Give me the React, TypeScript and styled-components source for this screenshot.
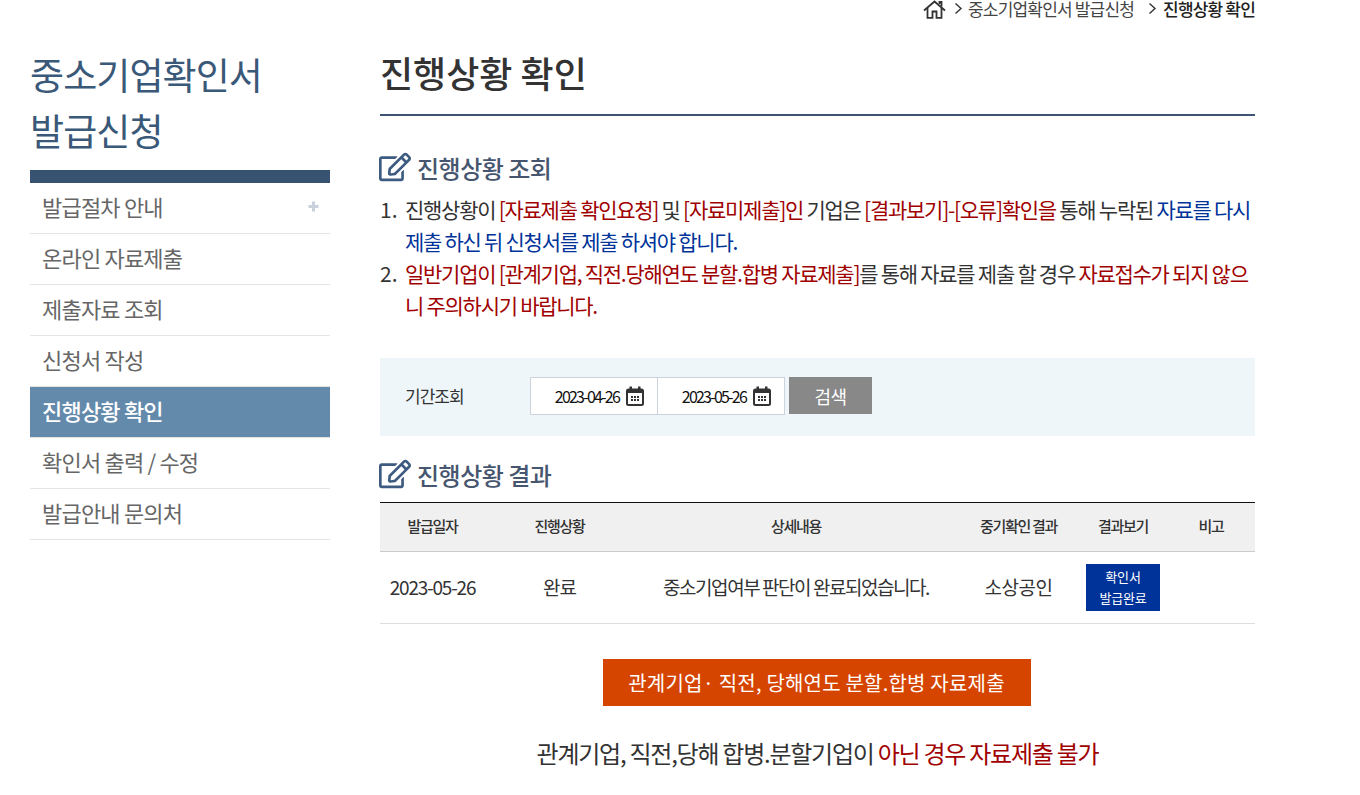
import styled, { createGlobalStyle } from 'styled-components';
import { FaRegEdit } from 'react-icons/fa';

const GlobalStyle = createGlobalStyle`
  html, body {
    margin: 0;
    padding: 0;
    background: #fff;
    overflow: hidden;
    font-family: "Noto Sans CJK KR", "Noto Sans", sans-serif;
    color: #333;
  }
  * { box-sizing: border-box; }
`;

const Page = styled.div`
  width: 1360px;
  height: 795px;
  overflow: hidden;
`;

const Breadcrumb = styled.div`
  display: flex;
  justify-content: flex-end;
  align-items: center;
  height: 19px;
  width: 1255px;
  font-size: 17px;
  line-height: 17px;
  letter-spacing: -0.82px;
  color: #444;
`;

const Crumb = styled.span<{ $gap: number; $current?: boolean }>`
  display: flex;
  align-items: center;
  margin-left: ${({ $gap }) => $gap}px;
  padding-bottom: 2px;
  font-weight: ${({ $current }) => ($current ? 500 : 400)};
  color: ${({ $current }) => ($current ? '#222' : '#444')};
`;

const Columns = styled.div`
  display: flex;
  padding: 0 0 0 30px;
`;

const Sidebar = styled.aside`
  width: 300px;
  margin-right: 50px;
  padding-top: 27px;
`;

const SideTitle = styled.h2`
  margin: 0 0 12px;
  font-size: 37px;
  line-height: 56px;
  font-weight: 400;
  letter-spacing: -0.9px;
  color: #3a5878;
`;

const SideBar = styled.div`
  height: 13px;
  background: #385372;
`;

const SideItem = styled.div<{ $active?: boolean }>`
  display: flex;
  justify-content: space-between;
  align-items: center;
  height: 51px;
  padding: 0 11px 4px 12px;
  font-size: 22px;
  letter-spacing: -0.8px;
  font-weight: ${({ $active }) => ($active ? 500 : 400)};
  color: ${({ $active }) => ($active ? '#fff' : '#666')};
  background: ${({ $active }) => ($active ? '#6389ab' : '#fff')};
  border-bottom: 1px solid #e4e4e4;
`;

const Main = styled.main`
  width: 875px;
`;

const PageTitle = styled.h1`
  margin: 0;
  height: 97px;
  padding-top: 26px;
  font-size: 36px;
  line-height: 54px;
  font-weight: 500;
  letter-spacing: 0;
  color: #333;
  border-bottom: 2px solid #3d5472;
`;

const SectionTitle = styled.h3<{ $top: number }>`
  display: flex;
  align-items: center;
  gap: 6px;
  margin: ${({ $top }) => $top}px 0 0;
  height: 36px;
  font-size: 24px;
  font-weight: 500;
  letter-spacing: -0.5px;
  color: #46566f;
  svg { color: #3d5a80; margin-left: -1px; }
`;

const Notes = styled.ol`
  margin: 8px 0 0;
  padding: 0;
  list-style: none;
  font-size: 21px;
  line-height: 32px;
  letter-spacing: -1.27px;
  color: #333;
`;

const Note = styled.li`
  display: flex;
`;

const NoteNo = styled.span`
  flex: 0 0 25px;
  letter-spacing: 0;
`;

const Red = styled.span`
  color: #a00000;
`;

const Blue = styled.span`
  color: #003399;
`;

const SearchBox = styled.div`
  display: flex;
  align-items: center;
  height: 78px;
  margin-top: 37px;
  padding: 0 0 3px 25px;
  background: #eef6f9;
`;

const SearchLabel = styled.span`
  width: 125px;
  font-size: 17px;
  letter-spacing: -1px;
  color: #333;
`;

const DateInput = styled.div`
  display: flex;
  align-items: center;
  justify-content: flex-end;
  gap: 7px;
  width: 128px;
  height: 38px;
  margin-right: -1px;
  padding-right: 13px;
  background: #fff;
  border: 1px solid #ccd3dc;
  font-size: 16px;
  letter-spacing: -1.8px;
  color: #111;
`;

const SearchButton = styled.button`
  width: 83px;
  height: 37px;
  margin: 0 0 0 5px;
  border: 0;
  padding: 0;
  background: #888;
  color: #fff;
  font-family: inherit;
  font-size: 18px;
  letter-spacing: -0.5px;
`;

const Table = styled.table`
  width: 875px;
  margin-top: 10px;
  border-collapse: collapse;
  table-layout: fixed;
  border-top: 1px solid #111;
`;

const Th = styled.th<{ $w: number }>`
  width: ${({ $w }) => $w}px;
  height: 49px;
  padding: 0 0 4px;
  background: #f0f0f0;
  border-bottom: 1px solid #ccc;
  font-size: 15px;
  font-weight: 500;
  letter-spacing: -1.3px;
  color: #333;
`;

const Td = styled.td<{ $spacing?: number }>`
  height: 72px;
  padding: 0 0 2px;
  text-align: center;
  border-bottom: 1px solid #ddd;
  font-size: 19px;
  letter-spacing: ${({ $spacing }) => $spacing ?? -1.45}px;
  color: #333;
`;

const BadgeCell = styled(Td)`
  padding: 0;
`;

const StatusBadge = styled.div`
  width: 74px;
  height: 47px;
  margin: 0 auto;
  padding-top: 2px;
  background: #003399;
  color: #fff;
  font-size: 13px;
  line-height: 21px;
  letter-spacing: -0.2px;
`;

const ActionRow = styled.div`
  display: flex;
  justify-content: center;
  margin-top: 35px;
  padding-right: 2px;
`;

const ActionButton = styled.button`
  width: 428px;
  height: 47px;
  border: 0;
  padding: 0;
  background: #d64500;
  color: #fff;
  font-family: inherit;
  font-size: 20px;
  letter-spacing: 0.2px;
`;

const Warning = styled.p`
  margin: 27px 0 0;
  text-align: center;
  font-size: 24px;
  line-height: 40px;
  letter-spacing: -1.25px;
  color: #333;
`;

const HomeIcon = () => (
  <svg width="23" height="19" viewBox="0 0 23 19" fill="none" stroke="#333" strokeWidth="1.8">
    <path d="M1 10.5 L11.5 1.5 L22 10.5" />
    <path d="M4.5 8 V17.8 H9.5 V11.5 H13.5 V17.8 H18.5 V8" />
    <path d="M16.5 4 V2 H18.5 V6.5" />
  </svg>
);

const Chevron = () => (
  <svg width="9" height="13" viewBox="0 0 9 13" fill="none" stroke="#333" strokeWidth="1.4">
    <path d="M1.5 1.5 L7 6.5 L1.5 11.5" />
  </svg>
);

const CalendarIcon = () => (
  <svg width="18" height="20" viewBox="0 0 18 20">
    <rect x="1" y="3.5" width="16" height="15.5" rx="1.5" fill="#fff" stroke="#333" strokeWidth="2" />
    <rect x="1" y="3" width="16" height="4" fill="#333" />
    <rect x="3.5" y="0.5" width="2.5" height="4.5" fill="#333" />
    <rect x="12" y="0.5" width="2.5" height="4.5" fill="#333" />
    {[5, 8, 11].map((x) =>
      [10, 13].map((y) => <rect key={`${x}-${y}`} x={x} y={y} width="2" height="2" fill="#333" />),
    )}
  </svg>
);

const PlusIcon = () => (
  <svg width="11" height="11" viewBox="0 0 11 11" fill="#c9d2dc">
    <rect x="4" y="0.5" width="3" height="10" />
    <rect x="0.5" y="4" width="10" height="3" />
  </svg>
);

const menu = ['발급절차 안내', '온라인 자료제출', '제출자료 조회', '신청서 작성', '진행상황 확인', '확인서 출력 / 수정', '발급안내 문의처'];

export default function App() {
  return (
    <Page>
      <GlobalStyle />
      <Breadcrumb>
        <HomeIcon />
        <Crumb $gap={8}><Chevron /></Crumb>
        <Crumb $gap={5}>중소기업확인서 발급신청</Crumb>
        <Crumb $gap={14}><Chevron /></Crumb>
        <Crumb $gap={6} $current>진행상황 확인</Crumb>
      </Breadcrumb>
      <Columns>
        <Sidebar>
          <SideTitle>중소기업확인서<br />발급신청</SideTitle>
          <SideBar />
          {menu.map((item, i) => (
            <SideItem key={item} $active={i === 4}>
              {item}
              {i === 0 && <PlusIcon />}
            </SideItem>
          ))}
        </Sidebar>
        <Main>
          <PageTitle>진행상황 확인</PageTitle>
          <SectionTitle $top={33}><FaRegEdit size={32} />진행상황 조회</SectionTitle>
          <Notes>
            <Note>
              <NoteNo>1.</NoteNo>
              <div>
                진행상황이 <Red>[자료제출 확인요청]</Red> 및 <Red>[자료미제출]인</Red> 기업은 <Red>[결과보기]-[오류]확인을</Red> 통해 누락된 <Blue>자료를 다시 제출 하신 뒤 신청서를 제출 하셔야 합니다.</Blue>
              </div>
            </Note>
            <Note>
              <NoteNo>2.</NoteNo>
              <div>
                <Red>일반기업이 [관계기업, 직전.당해연도 분할.합병 자료제출]</Red>를 통해 자료를 제출 할 경우 <Red>자료접수가 되지 않으니 주의하시기 바랍니다.</Red>
              </div>
            </Note>
          </Notes>
          <SearchBox>
            <SearchLabel>기간조회</SearchLabel>
            <DateInput>2023-04-26<CalendarIcon /></DateInput>
            <DateInput>2023-05-26<CalendarIcon /></DateInput>
            <SearchButton>검색</SearchButton>
          </SearchBox>
          <SectionTitle $top={20}><FaRegEdit size={32} />진행상황 결과</SectionTitle>
          <Table>
            <thead>
              <tr>
                <Th $w={105}>발급일자</Th>
                <Th $w={149}>진행상황</Th>
                <Th $w={324}>상세내용</Th>
                <Th $w={121}>중기확인 결과</Th>
                <Th $w={88}>결과보기</Th>
                <Th $w={88}>비고</Th>
              </tr>
            </thead>
            <tbody>
              <tr>
                <Td $spacing={-1.2}>2023-05-26</Td>
                <Td $spacing={-1}>완료</Td>
                <Td>중소기업여부 판단이 완료되었습니다.</Td>
                <Td $spacing={-0.5}>소상공인</Td>
                <BadgeCell><StatusBadge>확인서<br />발급완료</StatusBadge></BadgeCell>
                <Td />
              </tr>
            </tbody>
          </Table>
          <ActionRow><ActionButton>관계기업· 직전, 당해연도 분할.합병 자료제출</ActionButton></ActionRow>
          <Warning>관계기업, 직전,당해 합병.분할기업이 <Red>아닌 경우 자료제출 불가</Red></Warning>
        </Main>
      </Columns>
    </Page>
  );
}
